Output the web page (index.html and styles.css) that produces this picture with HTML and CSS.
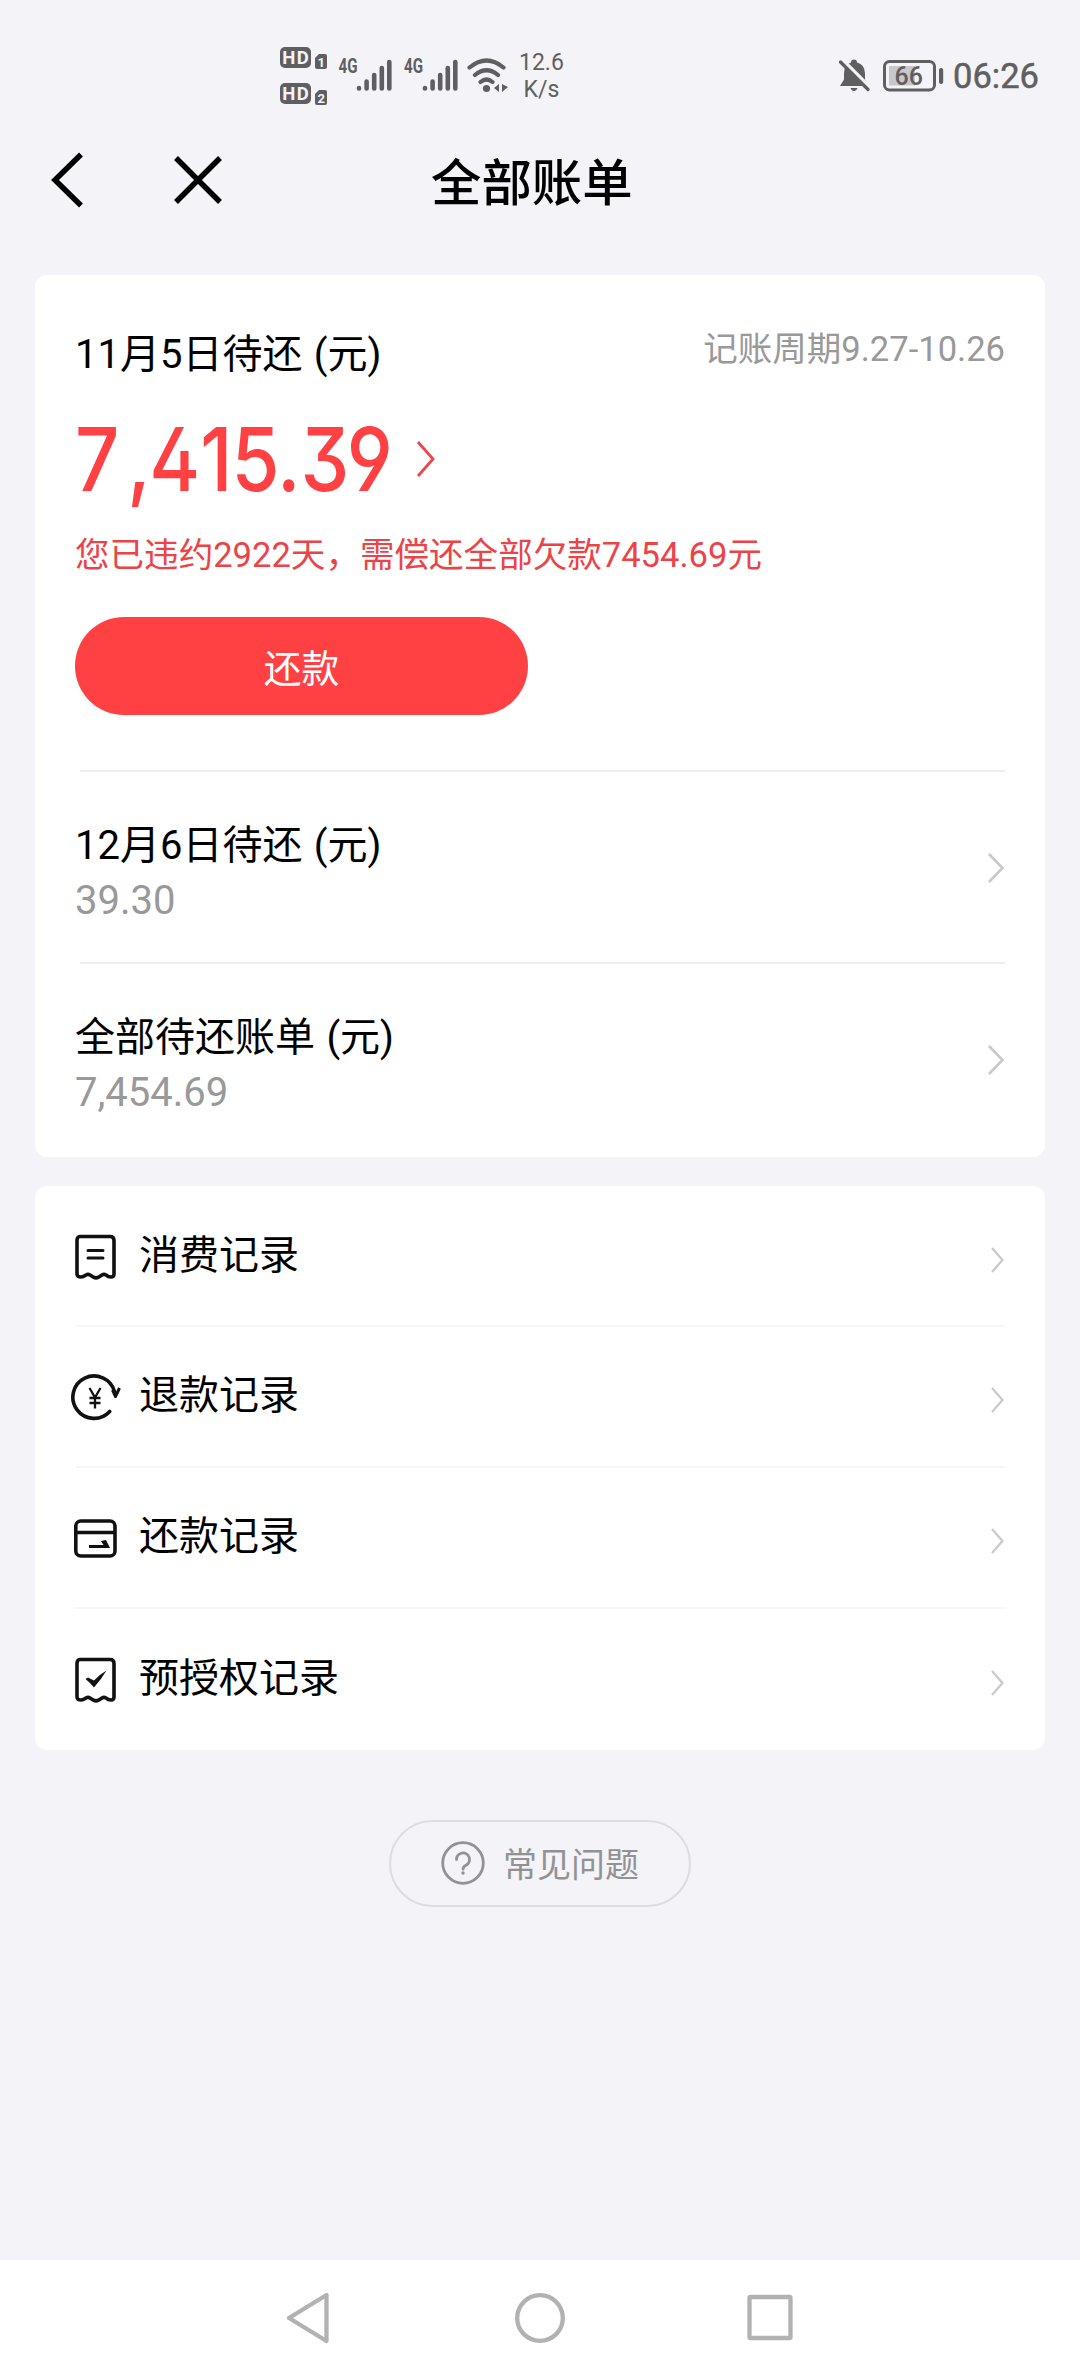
FILE: index.html
```html
<!DOCTYPE html>
<html lang="zh-CN">
<head>
<meta charset="utf-8">
<title>全部账单</title>
<link rel="stylesheet" href="styles.css">
</head>
<body>
<div class="status">
  <div class="status-left">
    <svg class="hd" width="48" height="58" viewBox="0 0 48 58">
      <g fill="#5f5f62">
        <rect x="0" y="0" width="31" height="21" rx="5"/>
        <rect x="0" y="36" width="31" height="21" rx="5"/>
        <path d="M39 7h6q2 0 2 2v11q0 2-2 2h-8q-2 0-2-2v-9z"/>
        <path d="M39 43h6q2 0 2 2v11q0 2-2 2h-8q-2 0-2-2v-9z"/>
      </g>
      <g class="hd-text"><text x="2.3" y="17" textLength="26.5">HD</text><text x="2.3" y="53" textLength="26.5">HD</text></g>
      <g class="sim-text"><text x="37.5" y="19.5">1</text><text x="37.5" y="55.5">2</text></g>
    </svg>
    <svg class="signal" width="56" height="46" viewBox="0 -10 56 46">
      <text class="net-text" x="0.500" y="15.5" textLength="19" lengthAdjust="spacingAndGlyphs">4G</text>
      <path class="bars" d="M21 31v.4M28.600 24.500v6.900M36.200 18v13.400M43.800 11v20.400M51.300 5v26.400"/>
    </svg>
    <svg class="signal" width="56" height="46" viewBox="0 -10 56 46">
      <text class="net-text" x="0" y="15.5" textLength="19" lengthAdjust="spacingAndGlyphs">4G</text>
      <path class="bars" d="M21 31v.4M28.600 24.500v6.900M36.200 18v13.400M43.800 11v20.400M51.300 5v26.400"/>
    </svg>
    <svg class="wifi" width="42" height="36" viewBox="0 0 42 36">
      <path d="M2.500 9.500Q19.500-4.500 36.500 9.500M8 17Q19.500 7.500 31 17M13.500 24Q19.500 19 25.500 24" fill="none" stroke="#5f5f62" stroke-width="4.200" stroke-linecap="round"/>
      <circle cx="19.500" cy="30.500" r="3.600" fill="#5f5f62"/>
      <path d="M27 30l5-4v8zM41 29l-6-3v8z" fill="#5f5f62"/>
    </svg>
    <div class="speed"><span>12.6</span><span>K/s</span></div>
  </div>
  <div class="status-right">
    <svg width="32" height="34" viewBox="0 0 32 34">
      <path d="M12 3.500q0-3 3-3t3 3q8 2 8 11v6l4 6.500H1l4-6.500v-6q0-9 7-11zM11.500 29h7q-1 3-3.500 3t-3.500-3z" fill="#5f5f62"/>
      <path d="M3 .5 31.500 29" stroke="#f3f3f8" stroke-width="4"/>
      <path d="M1.500 3 29 30.500" stroke="#5f5f62" stroke-width="3.200" stroke-linecap="round"/>
    </svg>
    <svg class="battery" width="61" height="32" viewBox="0 0 61 32">
      <rect x="1.500" y="1.500" width="50" height="28.500" rx="5" fill="none" stroke="#5f5f62" stroke-width="3"/>
      <rect x="6" y="6" width="26" height="19.500" fill="#c8c8cb"/>
      <rect x="56" y="8" width="4.200" height="16" rx="2" fill="#5f5f62"/>
      <text x="11.500" y="24.500">66</text>
    </svg>
    <span class="clock">06:26</span>
  </div>
</div>

<header class="header">
  <svg class="back" width="36" height="60" viewBox="0 0 36 60"><path d="M32 4.500 6 30l26 25.500" fill="none" stroke="#000" stroke-width="5.500"/></svg>
  <svg class="close" width="50" height="50" viewBox="0 0 50 50"><path d="M3 3l44 44M47 3 3 47" fill="none" stroke="#000" stroke-width="5.500"/></svg>
  <h1>全部账单</h1>
</header>

<main>
  <section class="card bills">
    <div class="due">
      <div class="due-head">
        <h2>11月5日待还 (元)</h2>
        <span class="cycle">记账周期9.27-10.26</span>
      </div>
      <div class="amount">
        <span class="figure">7<i class="comma">,</i>4<i class="one">1</i>5<i class="dot">.</i>39</span>
        <svg width="20" height="38" viewBox="0 0 20 38"><path d="M2 2l15 17L2 36" fill="none" stroke="#f24449" stroke-width="2.800"/></svg>
      </div>
      <p class="warn">您已违约2922天，需偿还全部欠款7454.69元</p>
      <button class="pay">还款</button>
    </div>
    <div class="bill">
      <div><h2>12月6日待还 (元)</h2><p>39.30</p></div>
      <svg width="18" height="32" viewBox="0 0 18 32"><path d="M2 2l13.500 14L2 30" fill="none" stroke="#c9c9c9" stroke-width="2.600"/></svg>
    </div>
    <div class="bill">
      <div><h2>全部待还账单 (元)</h2><p>7,454.69</p></div>
      <svg width="18" height="32" viewBox="0 0 18 32"><path d="M2 2l13.500 14L2 30" fill="none" stroke="#c9c9c9" stroke-width="2.600"/></svg>
    </div>
  </section>

  <section class="card records">
    <div class="record">
      <svg class="icon" width="52" height="52" viewBox="0 0 52 52"><g transform="translate(0 -1)"><path d="M10 6.500h30q4 0 4 4V44q0 3-3 3-3 0-5-2-2-1.300-4 0l-3.500 2.200q-2.500 1.300-5 0L20 45q-2-1.300-4 0-3 2-5 2-4 0-4-3V10.500q0-4 3-4z"/><path d="M18 20.500h15M18 28h15" stroke-linecap="round" stroke-width="3"/></g></svg>
      <span>消费记录</span>
      <svg class="go" width="15" height="28" viewBox="0 0 15 28"><path d="M2 2l10.500 12L2 26" fill="none" stroke="#c9c9c9" stroke-width="2.200"/></svg>
    </div>
    <div class="record">
      <svg class="icon" width="52" height="52" viewBox="0 0 52 52"><path d="M39.700 40.500A21.200 21.200 0 1 1 44.500 20.500" stroke-linecap="round"/><path d="M42.500 19l3 6.500 4-8.500" stroke-linejoin="round" stroke-width="3"/><path d="M19.500 17l5.500 9.500 5.500-9.500M25 26v11.500M19.500 27h11M19.500 32h11" stroke-width="2.300"/></svg>
      <span>退款记录</span>
      <svg class="go" width="15" height="28" viewBox="0 0 15 28"><path d="M2 2l10.500 12L2 26" fill="none" stroke="#c9c9c9" stroke-width="2.200"/></svg>
    </div>
    <div class="record">
      <svg class="icon" width="52" height="52" viewBox="0 0 52 52"><rect x="5.800" y="9" width="39.200" height="35" rx="5"/><path d="M5.800 20.500h39.200"/><path d="M19 33h14.500l-2.500-4 5-1 4 8H19z" fill="#111" stroke="none"/></svg>
      <span>还款记录</span>
      <svg class="go" width="15" height="28" viewBox="0 0 15 28"><path d="M2 2l10.500 12L2 26" fill="none" stroke="#c9c9c9" stroke-width="2.200"/></svg>
    </div>
    <div class="record">
      <svg class="icon" width="52" height="52" viewBox="0 0 52 52"><g transform="translate(0 -1)"><path d="M10 6.500h30q4 0 4 4V44q0 3-3 3-3 0-5-2-2-1.300-4 0l-3.500 2.200q-2.500 1.300-5 0L20 45q-2-1.300-4 0-3 2-5 2-4 0-4-3V10.500q0-4 3-4z"/><path d="M15.500 26l2.500-1.500 6 3q5.500-6 12.500-10-5 8.500-12.500 17-3.500-4.500-8.500-8.500z" fill="#111" stroke="none"/></g></svg>
      <span>预授权记录</span>
      <svg class="go" width="15" height="28" viewBox="0 0 15 28"><path d="M2 2l10.500 12L2 26" fill="none" stroke="#c9c9c9" stroke-width="2.200"/></svg>
    </div>
  </section>

  <div class="faq">
    <svg width="44" height="44" viewBox="0 0 44 44" fill="none" stroke="#929294" stroke-width="2.800"><circle cx="22" cy="22" r="20.300"/><path d="M15.500 18.500a6.500 6.500 0 1 1 9.500 5.700q-3 1.500-3 4" stroke-linecap="round"/><circle cx="22" cy="32" r="1.700" fill="#929294" stroke="none"/></svg>
    <span>常见问题</span>
  </div>
</main>

<nav class="nav">
  <svg width="50" height="54" viewBox="0 0 50 54"><path d="M42.500 4v46L5 27z"/></svg>
  <svg width="54" height="54" viewBox="0 0 54 54"><circle cx="27" cy="27" r="22.800"/></svg>
  <svg width="50" height="54" viewBox="0 0 50 54"><rect x="3.500" y="6" width="41" height="41" rx="1"/></svg>
</nav>
</body>
</html>
```
FILE: styles.css
```css
* { box-sizing: border-box; margin: 0; padding: 0; }

body {
  width: 1080px;
  height: 2376px;
  display: flex;
  flex-direction: column;
  background: #f3f3f8;
  font-family: Roboto, "Noto Sans CJK SC", sans-serif;
  color: #000;
  overflow: hidden;
}

svg { display: block; flex: none; }

/* status bar */
.status {
  height: 130px;
  padding: 0 41px 0 280px;
  display: flex;
  justify-content: space-between;
  align-items: flex-start;
  color: #5f5f62;
}
.status-left { display: flex; padding-top: 47px; }
.hd-text { font: 700 18.500px Roboto, sans-serif; fill: #f3f3f8; }
.sim-text { font: 700 13px Roboto, sans-serif; fill: #f3f3f8; }
.signal { margin: 0 0 0 10px; }
.net-text { font: 700 21px Roboto, sans-serif; fill: #5f5f62; }
.bars { fill: none; stroke: #5f5f62; stroke-width: 4.600; stroke-linecap: round; }
.wifi { margin: 11px 0 0 7px; }
.speed {
  display: flex;
  flex-direction: column;
  align-items: center;
  margin-left: 10px;
  padding-top: 2px;
  font-size: 23px;
  line-height: 27px;
}
.status-right { display: flex; padding-top: 59px; }
.battery { margin: 1px 0 0 12px; }
.battery text { font: 500 25px Roboto, sans-serif; fill: #5f5f62; }
.clock { margin-left: 9px; font-size: 34.500px; line-height: 34px; -webkit-text-stroke: .5px #5f5f62; }

/* title bar */
.header { height: 145px; display: flex; align-items: flex-start; padding-left: 49px; }
.back { margin-top: 20px; }
.close { margin: 25px 0 0 88px; }
.header h1 { margin: 17px 0 0 208px; font-size: 50.400px; font-weight: 500; line-height: 74px; }

/* cards */
.card { margin: 0 35px 29px; background: #fff; border-radius: 12px; }
.card h2 { font-size: 40px; font-weight: 400; line-height: 56px; word-spacing: 1.500px; }
.bills { height: 882px; }
.due { height: 495px; padding: 52px 40px 0; }
.due-head { height: 56px; display: flex; justify-content: space-between; align-items: flex-start; }
.cycle { font-size: 34.560px; line-height: 44px; color: #999; }
.amount { height: 94px; margin-top: 29px; display: flex; align-items: center; color: #ff4144; }

/* condensed numerals */
.figure {
  width: 341px;
  font: 500 88px/94px Inter, sans-serif;
  font-feature-settings: "cv09", "cv04", "ss01", "kern" 0;
  letter-spacing: -3px;
  white-space: nowrap;
  transform: scaleX(.883);
  transform-origin: 0 50%;
}
.figure i { font-style: normal; }
.figure .comma { margin: 0 1px 0 12px; }
.figure .one { margin: 0 2px 0 3px; }
.figure .dot { margin-right: 3px; }

.warn { margin-top: 23px; font-size: 34.560px; line-height: 52px; color: #ec4347; }
.pay {
  display: block;
  width: 453px;
  height: 98px;
  margin-top: 36px;
  padding-bottom: 2px;
  border: 0;
  border-radius: 49px;
  background: #ff4144;
  color: #fff;
  font: 37.800px Roboto, "Noto Sans CJK SC", sans-serif;
}
.bill {
  height: 192px;
  margin: 0 40px 0 45px;
  border-top: 2px solid #eee;
  display: flex;
  justify-content: space-between;
  align-items: center;
}
.bill > div { margin-left: -5px; padding-top: 11px; }
.bill p { padding-top: 1px; font-size: 40px; line-height: 52px; color: #999; }
.bill svg { margin-top: 2px; }

.record {
  height: 141px;
  margin: 0 40px 0 35px;
  display: flex;
  align-items: center;
  font-size: 40px;
}
.records { height: 564px; }
.record:first-child { height: 139px; }
.record:last-child { height: 143px; }
.record + .record { background: linear-gradient(#f6f6f6, #f6f6f6) 6px 0 / 100% 2px no-repeat; }
.record span { margin-left: 17px; padding-top: 1px; line-height: 56px; }
.record .go { margin: 8px 0 0 auto; }
.icon { margin-top: 3px; fill: none; stroke: #111; stroke-width: 3.600; }

.faq {
  width: 302px;
  height: 87px;
  margin: 70px auto 0;
  padding-bottom: 2px;
  border: 2px solid #dddde1;
  border-radius: 44px;
  display: flex;
  align-items: center;
  justify-content: center;
  gap: 18px;
  color: #929294;
  font-size: 34px;
}

/* system navigation */
.nav {
  height: 116px;
  margin-top: auto;
  padding: 0 284px;
  display: flex;
  justify-content: space-between;
  align-items: center;
  background: #fff;
}
.nav svg { fill: none; stroke: #b2b2b2; stroke-width: 4.300; stroke-linejoin: round; }
```
